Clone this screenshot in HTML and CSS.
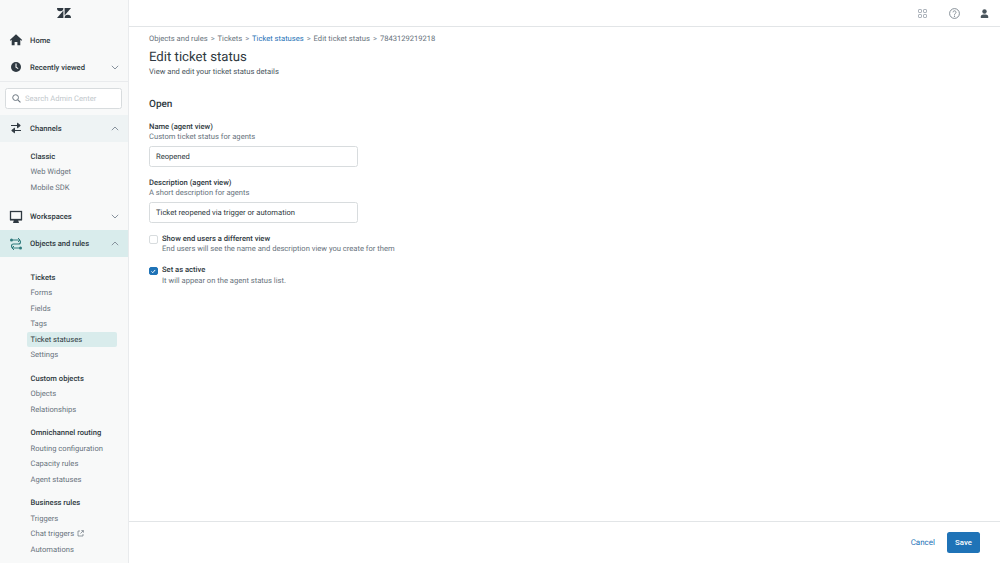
FILE: index.html
```html
<!DOCTYPE html>
<html lang="en">
<head>
<meta charset="utf-8">
<title>Edit ticket status</title>
<link rel="stylesheet" href="styles.css">
</head>
<body>
<div class="app">
  <aside class="sidebar">
    <div class="logo">
      <svg width="14" height="10" viewBox="0 0 14 10"><path fill="#2f3941" d="M6.4 2.6V10H0zM6.4 0a3.2 3.2 0 0 1-6.4 0zM7.6 10a3.2 3.2 0 0 1 6.4 0zM7.6 7.4V0H14z"/></svg>
    </div>
    <a class="main-row"><svg class="ico" viewBox="0 0 14 14"><path fill="#2f3941" d="M7 1.3 13.2 7l-.7.8-1.2-1v5.5H8.4V9H5.6v3.3H2.7V6.8l-1.2 1L.8 7z" /></svg><span class="main-label">Home</span></a>
    <a class="main-row"><svg class="ico" viewBox="0 0 14 14"><circle cx="7" cy="7" r="5" fill="#2f3941"/><path d="M7 3.6V7.2l2.2 1.4" fill="none" stroke="#f8f9f9" stroke-width="1.1"/></svg><span class="main-label">Recently viewed</span><svg class="chev" viewBox="0 0 8 5"><path d="M.8.8 4 4l3.2-3.2" fill="none" stroke="#87929d"/></svg></a>
    <div class="search-wrap">
      <div class="search">
        <svg class="search-ico" viewBox="0 0 10 10"><circle cx="4" cy="4" r="3.2" fill="none" stroke="#68737d" stroke-width="1.1"/><path d="m6.4 6.4 3 3" stroke="#68737d" stroke-width="1.2"/></svg>
        <span>Search Admin Center</span>
      </div>
    </div>
    <a class="main-row soft"><svg class="ico" viewBox="0 0 14 14"><path d="M2 4.5h9M8.500 2.200l2.800 2.300-2.800 2.300zM12 9.500H3M5.500 7.200 2.700 9.500l2.800 2.300z" fill="#2f3941" stroke="#2f3941" stroke-width="1"/></svg><span class="main-label">Channels</span><svg class="chev" viewBox="0 0 8 5"><path d="M.8 4.200 4 1l3.200 3.200" fill="none" stroke="#87929d"/></svg></a>
    <div class="group first">
      <div class="group-title">Classic</div>
      <a class="item">Web Widget</a>
      <a class="item">Mobile SDK</a>
    </div>
    <a class="main-row"><svg class="ico" viewBox="0 0 14 14"><rect x="1.500" y="1.500" width="11" height="8" fill="none" stroke="#2f3941" stroke-width="1.300"/><path fill="#2f3941" d="M1 9h12v1.500H1zM4 13h6l-.8-2.500H4.800z"/></svg><span class="main-label">Workspaces</span><svg class="chev" viewBox="0 0 8 5"><path d="M.8.8 4 4l3.200-3.200" fill="none" stroke="#87929d"/></svg></a>
    <a class="main-row active"><svg class="ico" viewBox="0 0 14 14"><path d="M3.500 3h6a2 2 0 0 1 0 4H4.500a2 2 0 0 0 0 4h6" fill="none" stroke="#2f7a7c" stroke-width="1.100"/><circle cx="2.500" cy="3" r="1.500" fill="#2f7a7c"/><circle cx="11.500" cy="11" r="1.500" fill="#2f7a7c"/><path d="m9 1 2 2-2 2M5 9l-2 2 2 2" fill="none" stroke="#2f7a7c"/></svg><span class="main-label">Objects and rules</span><svg class="chev" viewBox="0 0 8 5"><path d="M.8 4.200 4 1l3.200 3.200" fill="none" stroke="#87929d"/></svg></a>
    <div class="group tickets">
      <div class="group-title">Tickets</div>
      <a class="item">Forms</a>
      <a class="item">Fields</a>
      <a class="item">Tags</a>
      <a class="item selected">Ticket statuses</a>
      <a class="item">Settings</a>
    </div>
    <div class="group">
      <div class="group-title">Custom objects</div>
      <a class="item">Objects</a>
      <a class="item">Relationships</a>
    </div>
    <div class="group omni">
      <div class="group-title">Omnichannel routing</div>
      <a class="item">Routing configuration</a>
      <a class="item">Capacity rules</a>
      <a class="item">Agent statuses</a>
    </div>
    <div class="group">
      <div class="group-title">Business rules</div>
      <a class="item">Triggers</a>
      <a class="item">Chat triggers <svg class="ext" viewBox="0 0 7 7"><path d="M3 1H1v5h5V4M3.500 3.500 6.300.7M4.300.6h2.100v2.100" fill="none" stroke="#68737d" stroke-width=".7"/></svg></a>
      <a class="item">Automations</a>
    </div>
  </aside>
  <div class="content">
    <header class="topbar">
      <svg class="top-ico grid-ico" viewBox="0 0 9 9"><g fill="none" stroke="#a5adb5" stroke-width=".9"><rect x=".5" y=".5" width="3" height="3" rx=".5"/><rect x="5.500" y=".5" width="3" height="3" rx=".5"/><rect x=".5" y="5.500" width="3" height="3" rx=".5"/><rect x="5.500" y="5.500" width="3" height="3" rx=".5"/></g></svg>
      <svg class="top-ico help-ico" viewBox="0 0 11 11"><circle cx="5.500" cy="5.500" r="4.900" fill="none" stroke="#68737d" stroke-width=".8"/><path d="M4 4.300a1.500 1.500 0 1 1 2.300 1.300c-.5.300-.8.600-.8 1.200" fill="none" stroke="#68737d" stroke-width=".8"/><circle cx="5.500" cy="8.200" r=".6" fill="#68737d"/></svg>
      <svg class="top-ico user-ico" viewBox="0 0 9 9"><circle cx="4.500" cy="2.500" r="2.200" fill="#49545c"/><path fill="#49545c" d="M.8 9V7.500c0-1.400 1.500-2 3.700-2s3.700.6 3.700 2V9z"/></svg>
    </header>
    <main class="main">
      <nav class="crumbs">
        <a>Objects and rules</a><span class="sep">&gt;</span><a>Tickets</a><span class="sep">&gt;</span><a class="link">Ticket statuses</a><span class="sep">&gt;</span><a>Edit ticket status</a><span class="sep">&gt;</span><a>7843129219218</a>
      </nav>
      <h1 class="title">Edit ticket status</h1>
      <p class="subtitle">View and edit your ticket status details</p>
      <h2 class="section">Open</h2>
      <div class="field">
        <div class="label">Name (agent view)</div>
        <div class="hint">Custom ticket status for agents</div>
        <div class="input">Reopened</div>
      </div>
      <div class="field">
        <div class="label">Description (agent view)</div>
        <div class="hint">A short description for agents</div>
        <div class="input">Ticket reopened via trigger or automation</div>
      </div>
      <div class="check-row">
        <span class="box"></span>
        <div>
          <div class="label">Show end users a different view</div>
          <div class="hint">End users will see the name and description view you create for them</div>
        </div>
      </div>
      <div class="check-row">
        <span class="box checked"><svg viewBox="0 0 8 8"><path d="m1.800 4.200 1.600 1.600 3-3.400" fill="none" stroke="#fff" stroke-width="1.200"/></svg></span>
        <div>
          <div class="label">Set as active</div>
          <div class="hint">It will appear on the agent status list.</div>
        </div>
      </div>
    </main>
    <footer class="footer">
      <a class="cancel">Cancel</a>
      <button class="save">Save</button>
    </footer>
  </div>
</div>
</body>
</html>
```

FILE: styles.css
```css
* { box-sizing: border-box; }
html, body { margin: 0; height: 100%; }
body { font-family: Roboto, "Liberation Sans", sans-serif; font-size: 7.600px; text-rendering: geometricPrecision; color: #2f3941; background: #fff; overflow: hidden; }
.app { display: flex; width: 1000px; height: 563px; overflow: hidden; }
.sidebar { width: 128.5px; flex: none; height: 563px; overflow: hidden; background: #f8f9f9; border-right: 1px solid #e9ebed; }
.logo { height: 26.500px; display: flex; align-items: center; justify-content: center; }
.main-row { height: 27px; display: flex; align-items: center; padding-left: 9px; padding-right: 9px; font-weight: 500; color: #2f3941; }
.ico { width: 14px; height: 14px; flex: none; }
.main-label { margin-left: 7px; flex: 1; }
.chev { width: 8px; height: 5px; flex: none; }
.search-wrap { border-top: 1px solid #e9ebed; padding: 6px 6px 0 5px; height: 34px; }
.search { height: 21px; background: #fff; border: 1px solid #d8dcde; border-radius: 2.500px; display: flex; align-items: center; padding-left: 6px; color: #c2c8cc; gap: 4px; }
.search-ico { width: 9px; height: 9px; flex: none; }
.soft { background: #eef3f4; }
.active { background: #d9ecec; }
.group { padding-left: 27px; padding-right: 11px; margin-top: 7.750px; }
.group.first { margin-top: 7px; margin-bottom: 8px; }
.group.tickets { margin-top: 12.750px; }
.group.omni { margin-top: 8.250px; }
.group-title { height: 15.500px; line-height: 15.500px; padding-left: 3.500px; font-weight: 500; color: #2f3941; }
.item { display: block; height: 15.500px; line-height: 15.500px; padding-left: 3.500px; color: #68737d; border-radius: 2px; }
.selected { background: #d9ecec; color: #2f3941; }
.ext { width: 7px; height: 7px; margin-left: 1px; vertical-align: -1px; }
.content { flex: 1; min-width: 0; display: flex; flex-direction: column; height: 563px; }
.topbar { height: 27px; flex: none; border-bottom: 1px solid #e2e5e7; display: flex; align-items: center; justify-content: flex-end; padding-right: 11.500px; }
.top-ico { flex: none; }
.grid-ico { width: 9px; height: 9px; margin-right: 21.500px; }
.help-ico { width: 11px; height: 11px; margin-right: 20px; }
.user-ico { width: 9px; height: 9px; }
.main { flex: 1; padding: 5px 21px 0 20.500px; min-height: 0; }
.crumbs { display: flex; align-items: center; height: 13px; color: #68737d; }
.crumbs .sep { margin: 0 3px; color: #87929d; font-size: 7.500px; }
.link { color: #1f73b7; }
.title { margin: 4px 0 0; font-size: 13.200px; line-height: 18px; font-weight: 400; color: #2f3941; }
.subtitle { margin: -1px 0 0; line-height: 12px; color: #49545c; }
.section { margin: 19.500px 0 0; font-size: 10px; line-height: 14px; font-weight: 500; }
.field { margin-top: 10px; }
.field + .field { margin-top: 10.750px; }
.label { font-weight: 500; line-height: 10.500px; color: #2f3941; }
.hint { line-height: 10.500px; color: #68737d; }
.input { margin-top: 3.750px; width: 209px; height: 20.500px; background: #fff; border: 1px solid #d8dcde; border-radius: 2.500px; display: flex; align-items: center; padding-left: 6px; color: #2f3941; }
.check-row { display: flex; gap: 4.500px; margin-top: 10.500px; }
.field + .check-row { margin-top: 11px; }
.box { width: 8.500px; height: 8.500px; flex: none; margin-top: 1.250px; background: #fff; border: 1px solid #d8dcde; border-radius: 2px; display: flex; }
.box.checked { background: #1f73b7; border-color: #1f73b7; }
.box svg { width: 100%; height: 100%; }
.footer { height: 42px; flex: none; border-top: 1px solid #e2e5e7; display: flex; align-items: center; justify-content: flex-end; padding-right: 20px; }
.cancel { color: #1f73b7; margin-right: 12px; font-weight: 400; font-size: 8px; }
.save { width: 33px; height: 21px; padding: 0; border: 0; border-radius: 2.500px; background: #1f73b7; color: #fff; font: 500 7.800px Roboto, "Liberation Sans", sans-serif; }
```
